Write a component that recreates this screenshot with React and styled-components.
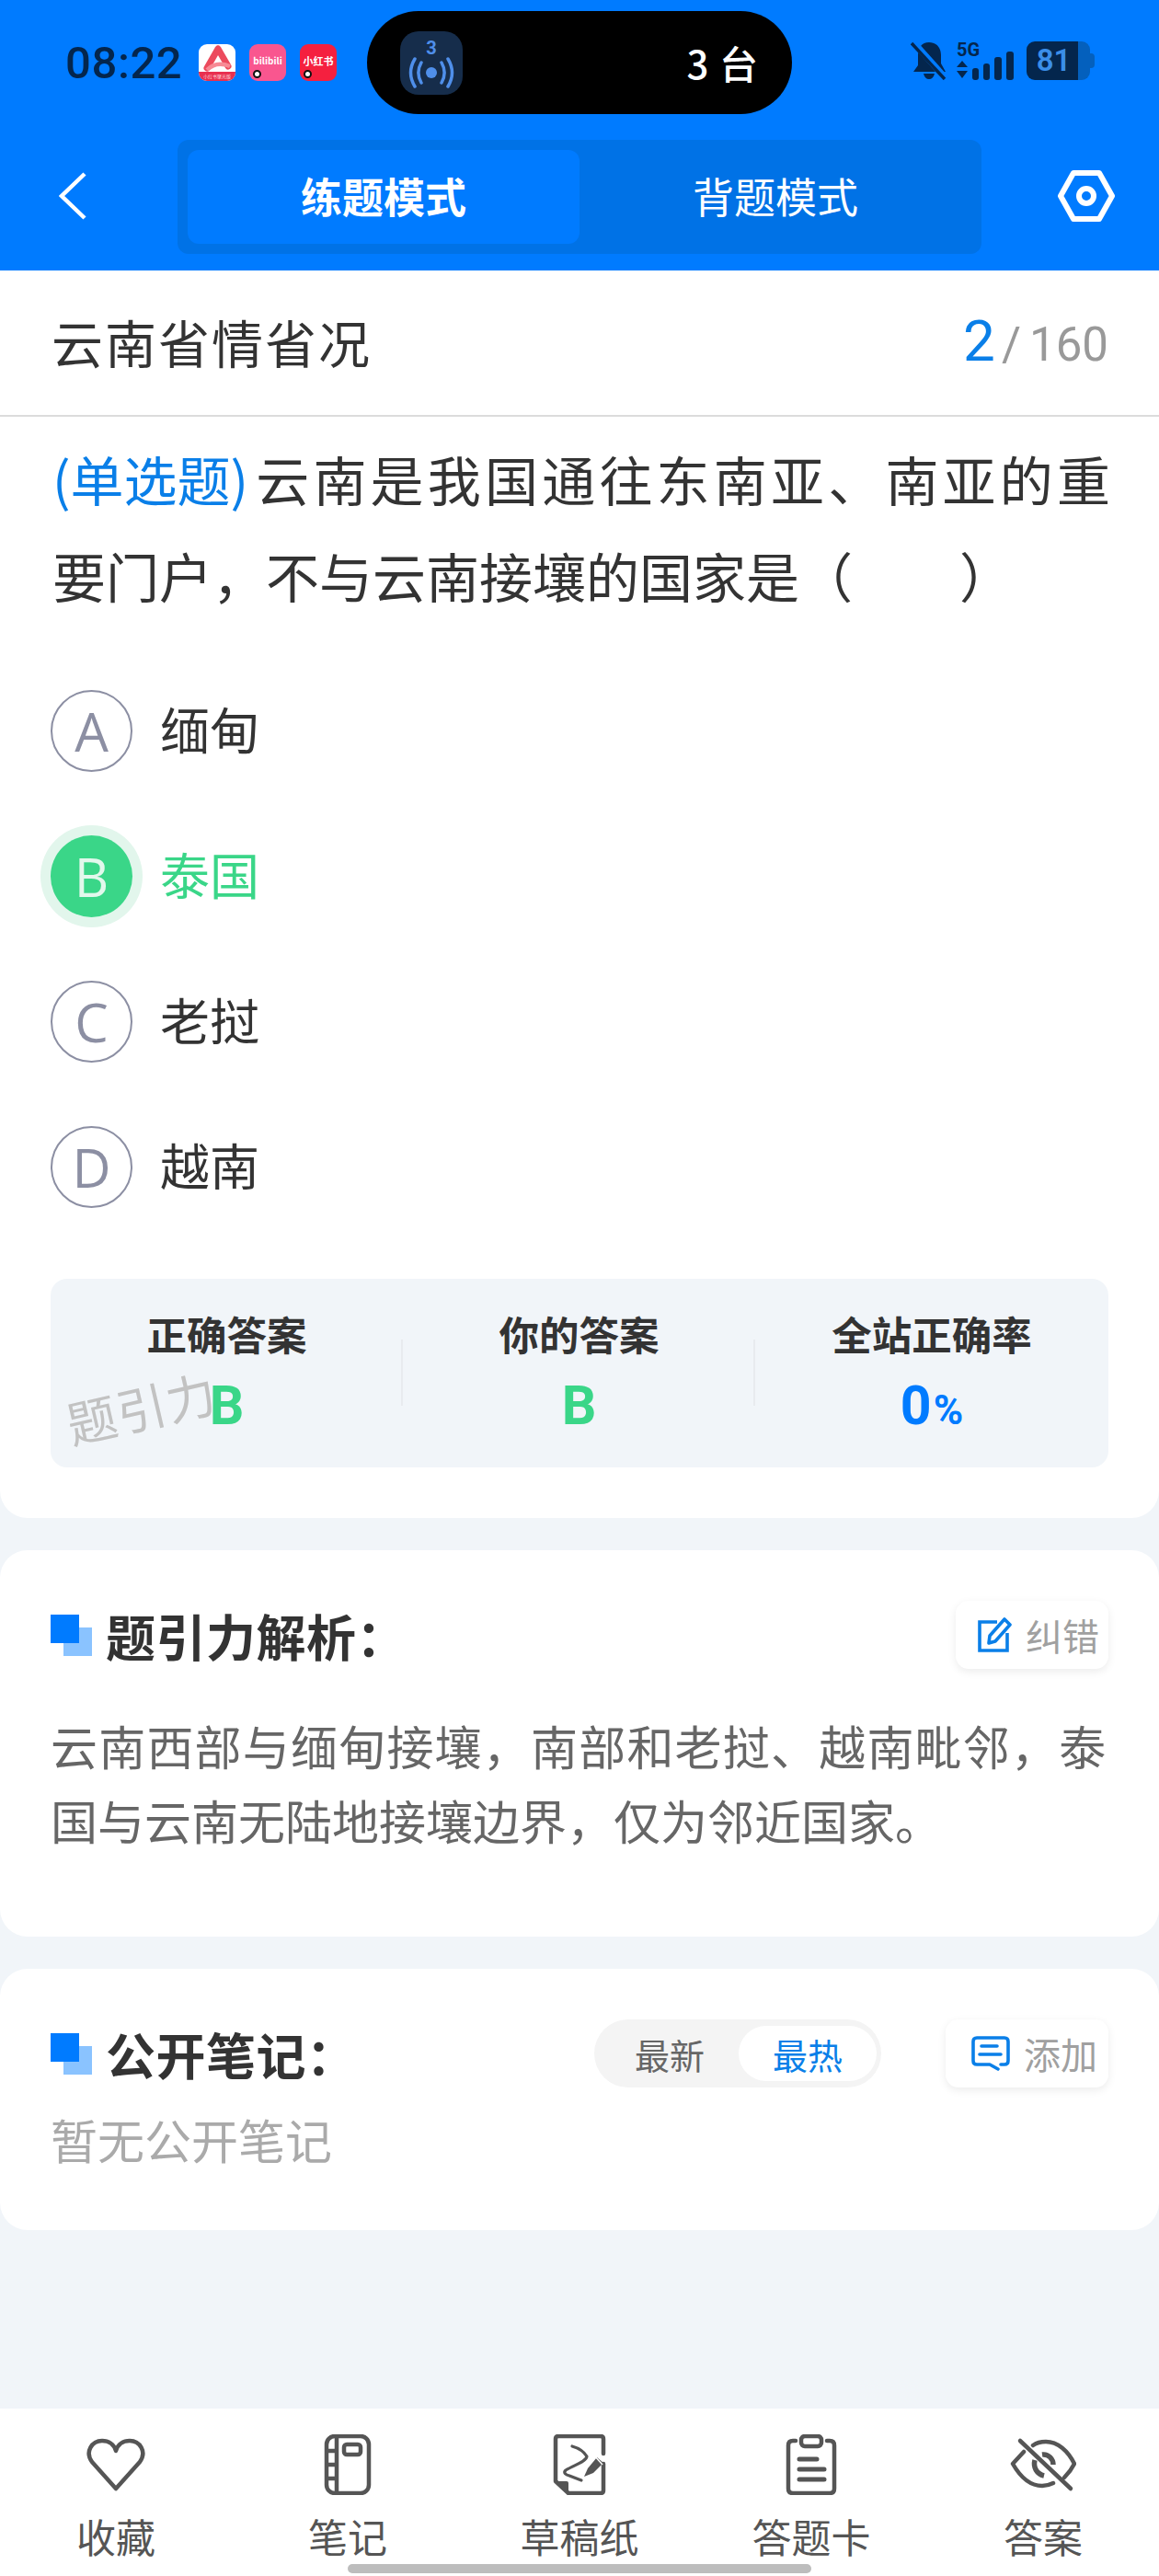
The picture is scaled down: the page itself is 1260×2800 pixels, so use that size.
import React from 'react';
import styled, { createGlobalStyle } from 'styled-components';

const BLUE = '#007bff';
const GREEN = '#3ad688';
const CJK = '"Noto Sans CJK SC", "Noto Sans", sans-serif';

const GlobalStyle = createGlobalStyle`
  html, body {
    margin: 0;
    padding: 0;
    background: #f1f5f9;
    font-family: ${CJK};
  }
  * { box-sizing: border-box; }
`;

const Page = styled.div`
  width: 1260px;
  height: 2800px;
  display: flex;
  flex-direction: column;
  position: relative;
  overflow: hidden;
  background: #f1f5f9;
`;

const Header = styled.header`
  height: 294px;
  flex: none;
  background: ${BLUE};
`;

const StatusBar = styled.div`
  height: 152px;
  padding-top: 12px;
  display: flex;
  align-items: flex-start;
`;

const StatusLeft = styled.div`
  width: 399px;
  height: 112px;
  padding-left: 71px;
  display: flex;
  align-items: center;
`;

const Clock = styled.span`
  width: 145px;
  font: 500 49px/1 Roboto, sans-serif;
  color: #04264d;
  letter-spacing: 0.6px;
`;

const AppIcon = styled.div`
  width: 40px;
  height: 40px;
  margin-right: 15px;
  border-radius: 9px;
  position: relative;
  overflow: hidden;
  background: ${p => p.$bg};
  color: #fff;
  font: 700 ${p => p.$size || 11}px/36px ${CJK};
  text-align: center;
  white-space: nowrap;
`;

const AppDot = styled.i`
  position: absolute;
  left: 4px;
  bottom: 3px;
  width: 9px;
  height: 9px;
  border-radius: 50%;
  background: #fff;
  border: 2.5px solid #111;
`;

const RedFoot = styled.div`
  position: absolute;
  left: 0;
  right: 0;
  bottom: 0;
  height: 10px;
  background: #e8304f;
  color: #ffd9df;
  font: 400 5px/10px ${CJK};
  text-align: center;
`;

const Island = styled.div`
  width: 462px;
  height: 112px;
  padding: 0 36px;
  border-radius: 56px;
  background: #000;
  display: flex;
  align-items: center;
  justify-content: space-between;
`;

const IslandApp = styled.div`
  width: 68px;
  height: 69px;
  border-radius: 20px;
  background: #162d4b;
  display: flex;
  align-items: center;
  justify-content: center;
`;

const IslandText = styled.span`
  color: #fff;
  font-size: 42px;
  line-height: 1;
  font-weight: 500;
  letter-spacing: 1px;
`;

const StatusRight = styled.div`
  flex: 1;
  height: 112px;
  padding: 0 0 4px 129px;
  display: flex;
  align-items: center;
`;

const BatteryBox = styled.div`
  margin-left: 10px;
  width: 74px;
  height: 42px;
  display: flex;
  align-items: stretch;
`;

const BatteryBody = styled.div`
  width: 56px;
  border-radius: 9px 0 0 9px;
  background: #04264d;
  color: #3b8ee8;
  font: 600 33px/42px Roboto, sans-serif;
  text-align: center;
  padding-left: 3px;
`;

const BatteryEnd = styled.div`
  width: 13px;
  border-radius: 0 9px 9px 0;
  background: #0460bd;
  position: relative;
  &::after {
    content: '';
    position: absolute;
    right: -5px;
    top: 13px;
    width: 5px;
    height: 16px;
    border-radius: 0 4px 4px 0;
    background: #0460bd;
  }
`;

const NavBar = styled.nav`
  height: 124px;
  display: flex;
  align-items: center;
  padding: 0 49px 0 64px;
`;

const Back = styled.div`
  width: 129px;
  height: 52px;
  margin-bottom: 3px;
  flex: none;
`;

const Segment = styled.div`
  width: 874px;
  height: 124px;
  flex: none;
  padding: 11px;
  border-radius: 12px;
  background: #0072e6;
  display: flex;
`;

const SegmentItem = styled.div`
  flex: 1;
  padding-bottom: 3px;
  border-radius: 12px;
  background: ${p => (p.$active ? BLUE : 'transparent')};
  color: #fff;
  font-size: 45px;
  font-weight: ${p => (p.$active ? 700 : 400)};
  display: flex;
  align-items: center;
  justify-content: center;
`;

const Gear = styled.div`
  margin-left: 83px;
  margin-bottom: 2px;
  width: 62px;
  height: 56px;
  flex: none;
`;

const QuestionCard = styled.section`
  background: #fff;
  border-radius: 0 0 30px 30px;
  padding-bottom: 55px;
`;

const TitleRow = styled.div`
  height: 159px;
  padding: 0 55px 4px 56px;
  border-bottom: 2px solid #dcdcdc;
  display: flex;
  align-items: center;
  justify-content: space-between;
`;

const ChapterTitle = styled.h1`
  margin: 0;
  font-size: 56px;
  font-weight: 400;
  letter-spacing: 2px;
  color: #333;
`;

const Progress = styled.div`
  display: flex;
  align-items: baseline;
  font-family: Roboto, sans-serif;
  color: #999;
  font-size: 51px;
`;

const ProgressNow = styled.span`
  color: #0a7fe8;
  font-size: 62px;
  margin-right: 7px;
`;

const ProgressSlash = styled.span`
  margin-right: 9px;
`;

const Question = styled.div`
  padding: 15px 55px 0 57px;
  font-size: 58px;
  line-height: 105px;
  color: #333;
  white-space: nowrap;
`;

const QuestionType = styled.span`
  color: #0a7fe8;
  margin-right: 8px;
`;

const FirstLine = styled.span`
  letter-spacing: 4.2px;
`;

const Options = styled.div`
  margin-top: 72px;
  padding-left: 55px;
  display: flex;
  flex-direction: column;
  gap: 69px;
`;

const OptionRow = styled.div`
  height: 89px;
  display: flex;
  align-items: center;
  gap: 30px;
`;

const Letter = styled.div`
  width: 89px;
  height: 89px;
  flex: none;
  border-radius: 50%;
  display: flex;
  align-items: center;
  justify-content: center;
  font: 400 58px/1 "Open Sans", sans-serif;
  ${p =>
    p.$picked
      ? `background: ${GREEN}; color: #e2f8ec; box-shadow: 0 0 0 11px #e2f6ec;`
      : 'border: 2px solid #8c8fa3; color: #8c8fa3;'}
`;

const OptionText = styled.span`
  margin-bottom: 6px;
  font-size: 54px;
  color: ${p => (p.$picked ? GREEN : '#333')};
`;

const AnswerBox = styled.div`
  margin: 77px 55px 0;
  height: 205px;
  border-radius: 18px;
  background: #f1f5f9;
  display: grid;
  grid-template-columns: 383px 383px 1fr;
  position: relative;
`;

const AnswerCol = styled.div`
  padding-top: 32px;
  display: flex;
  flex-direction: column;
  align-items: center;
  position: relative;
  &:not(:last-child)::after {
    content: '';
    position: absolute;
    right: 0;
    top: 66px;
    height: 72px;
    width: 2px;
    background: #e8ebef;
  }
`;

const AnswerLabel = styled.div`
  font-size: 43.5px;
  line-height: 56px;
  font-weight: 700;
  color: #333;
`;

const AnswerValue = styled.div`
  margin-top: 19px;
  font: 700 59px/62px Roboto, sans-serif;
  color: ${p => p.$color};
  small {
    font-size: 44px;
    margin-left: 2px;
  }
`;

const Watermark = styled.div`
  position: absolute;
  left: 16px;
  top: 112px;
  font-size: 54px;
  line-height: 1;
  letter-spacing: 1px;
  color: #c2c2c2;
  font-weight: 400;
  transform: rotate(-13deg);
  white-space: nowrap;
`;

const Card = styled.section`
  margin-top: 35px;
  padding: 55px 55px 0;
  height: ${p => p.$height}px;
  background: #fff;
  border-radius: 30px;
`;

const CardHead = styled.div`
  height: 74px;
  display: flex;
  align-items: center;
`;

const Mark = styled.div`
  width: 45px;
  height: 45px;
  flex: none;
  margin-right: 15px;
  position: relative;
  &::before,
  &::after {
    content: '';
    position: absolute;
    width: 31px;
    height: 31px;
  }
  &::before {
    right: 0;
    bottom: 0;
    background: #8ac3ff;
  }
  &::after {
    left: 0;
    top: 0;
    background: ${BLUE};
  }
`;

const CardTitle = styled.h2`
  margin: 0;
  font-size: 54px;
  font-weight: 700;
  color: #333;
  letter-spacing: 0.5px;
`;

const Spacer = styled.div`
  flex: 1;
`;

const SideButton = styled.div`
  height: 74px;
  width: ${p => p.$w}px;
  padding-left: ${p => p.$pl}px;
  border-radius: 14px;
  background: #fff;
  box-shadow: 0 3px 10px rgba(0, 0, 0, 0.08);
  display: flex;
  align-items: center;
  gap: 15px;
  font-size: 40px;
  color: #a0a0a0;
`;

const BodyText = styled.p`
  margin: 43px 0 0;
  font-size: 51px;
  line-height: 81px;
  color: #666;
  white-space: nowrap;
`;

const BodyFirstLine = styled.span`
  letter-spacing: 1.2px;
`;

const SortPill = styled.div`
  width: 312px;
  height: 74px;
  margin-right: 70px;
  padding: 5px;
  border-radius: 37px;
  background: #f4f4f4;
  display: flex;
  justify-content: flex-end;
  align-items: center;
`;

const SortItem = styled.div`
  width: ${p => p.$w}px;
  height: 60px;
  padding-right: ${p => (p.$active ? 0 : 4)}px;
  border-radius: 30px;
  font-size: 38px;
  display: flex;
  align-items: center;
  justify-content: center;
  background: ${p => (p.$active ? '#fff' : 'transparent')};
  color: ${p => (p.$active ? '#0a7fe8' : '#666')};
`;

const EmptyNote = styled.div`
  margin-top: 20px;
  font-size: 51px;
  line-height: 72px;
  color: #aaa;
`;

const Filler = styled.div`
  flex: 1;
`;

const BottomBar = styled.footer`
  height: 182px;
  flex: none;
  padding-top: 28px;
  background: #fff;
  display: grid;
  grid-template-columns: repeat(5, 252px);
`;

const BarItem = styled.div`
  display: flex;
  flex-direction: column;
  align-items: center;
  color: #555;
`;

const BarIcon = styled.div`
  height: 66px;
  display: flex;
  align-items: center;
  justify-content: center;
`;

const BarLabel = styled.span`
  margin-top: 18px;
  font-size: 43px;
  line-height: 52px;
`;

const HomeBar = styled.div`
  position: absolute;
  left: 378px;
  bottom: 3px;
  width: 504px;
  height: 10px;
  border-radius: 5px;
  background: #bdbdbd;
`;

const stroke = { fill: 'none', stroke: '#555', strokeWidth: 4.5, strokeLinecap: 'round', strokeLinejoin: 'round' };

const icons = {
  heart: (
    <svg width="66" height="60" viewBox="0 0 66 60">
      <path {...stroke} d="M33 56 L7 27 C-1 16 7 4 18 4 C25 4 31 8 33 15 C35 8 41 4 48 4 C59 4 67 16 59 27 Z" />
    </svg>
  ),
  notebook: (
    <svg width="52" height="66" viewBox="0 0 52 66">
      <rect {...stroke} x="3" y="2" width="46" height="62" rx="9" />
      <path {...stroke} strokeLinecap="butt" d="M14 2 V64 M3 18 H14 M3 33 H14 M3 48 H14" />
      <rect {...stroke} x="22" y="11" width="18" height="11" rx="3" />
    </svg>
  ),
  draft: (
    <svg width="58" height="66" viewBox="0 0 58 66">
      <path {...stroke} d="M55 21 V5 Q55 2 52 2 H6 Q3 2 3 5 V51 L17 64 H52 Q55 64 55 61 V32" />
      <path fill="#555" d="M3 51 H15 Q17 51 17 53 V64 Z" />
      <path {...stroke} strokeWidth="3.2" d="M21 13 C28 15 34 19 37 24 C36 30 24 33 14 39 C11 42 14 44 18 45 L31 50" />
      <path fill="#555" d="M34 46 L38 37 L48 25 L55 31 L44 42 Z" />
      <path stroke="#fff" strokeWidth="1.5" d="M45 23 L54 33" />
    </svg>
  ),
  card: (
    <svg width="56" height="66" viewBox="0 0 56 66">
      <path {...stroke} d="M11 7 H8 Q3 7 3 12 V59 Q3 64 8 64 H48 Q53 64 53 59 V12 Q53 7 48 7 H45" />
      <rect {...stroke} x="17" y="2" width="22" height="11" rx="4" />
      <path {...stroke} strokeWidth="5" d="M15 27 H34 M15 38 H42 M15 49 H42" />
    </svg>
  ),
  eye: (
    <svg width="72" height="60" viewBox="0 0 72 60">
      <path {...stroke} d="M15 16 L3 29 C11 43 21 53 35 53 C39 53 43 52 47 50 M25 9 C29 6 34 5 39 5 C52 5 63 15 70 29 C67 35 63 40 59 44" />
      <path {...stroke} strokeWidth="5.5" strokeLinecap="butt" d="M27 25 C25 33 29 40 37 42 M35 19 C42 18 47 24 47 30" />
      <path {...stroke} d="M11 4 L66 56" />
    </svg>
  ),
};

const options = [
  { key: 'A', text: '缅甸' },
  { key: 'B', text: '泰国', picked: true },
  { key: 'C', text: '老挝' },
  { key: 'D', text: '越南' },
];

const barItems = [
  { icon: 'heart', label: '收藏' },
  { icon: 'notebook', label: '笔记' },
  { icon: 'draft', label: '草稿纸' },
  { icon: 'card', label: '答题卡' },
  { icon: 'eye', label: '答案' },
];

const StatusBlock = () => (
  <StatusBar>
    <StatusLeft>
      <Clock>08:22</Clock>
      <AppIcon $bg="#fff">
        <svg width="40" height="30" viewBox="0 0 40 30" style={{ display: 'block' }}>
          <path fill="none" stroke="#ec4a5d" strokeWidth="7" strokeLinecap="round" d="M21 5 L32 24 M21 5 L9 26" />
          <path fill="none" stroke="#f78a95" strokeWidth="4.5" d="M9 28 C16 21 24 20 34 24" />
        </svg>
        <RedFoot>小红书聚光版</RedFoot>
      </AppIcon>
      <AppIcon $bg="#f9568f" $size={10}>
        bilibili
        <AppDot />
      </AppIcon>
      <AppIcon $bg="#f5203f">
        小红书
        <AppDot />
      </AppIcon>
    </StatusLeft>
    <Island>
      <IslandApp>
        <svg width="50" height="58" viewBox="0 0 50 58">
          <text x="25" y="20" textAnchor="middle" fontSize="20" fontWeight="700" fontFamily="Roboto, sans-serif" fill="#4f8fea">3</text>
          <circle cx="25" cy="40" r="6" fill="#4f8fea" />
          <path fill="none" stroke="#4f8fea" strokeWidth="3.5" strokeLinecap="round" d="M14 29 C10 36 10 44 14 51 M36 29 C40 36 40 44 36 51 M7 25 C1 35 1 45 7 55 M43 25 C49 35 49 45 43 55" />
        </svg>
      </IslandApp>
      <IslandText>3 台</IslandText>
    </Island>
    <StatusRight>
      <svg width="40" height="42" viewBox="0 0 40 42">
        <path fill="#04264d" d="M20 1 C28 1 33 7 33 15 V24 L38 33 H3 L8 26 V15 C8 7 12 1 20 1 Z M14 35 H26 C25 39 23 41 20 41 C17 41 15 39 14 35 Z" />
        <path stroke={BLUE} strokeWidth="7" d="M4 2 L38 40" />
        <path stroke="#04264d" strokeWidth="3.5" d="M1 2 L37 41" />
      </svg>
      <svg width="66" height="60" viewBox="0 -8 66 60" style={{ marginLeft: 10 }}>
        <text x="0" y="17" fontSize="20" fontWeight="700" fontFamily="Roboto, sans-serif" fill="#04264d">5G</text>
        <path fill="#04264d" d="M6 22 L12 29 H0 Z M6 41 L12 33 H0 Z" />
        <rect x="17" y="30" width="7" height="13" rx="3" fill="#04264d" />
        <rect x="29" y="25" width="7" height="18" rx="3" fill="#04264d" />
        <rect x="41" y="18" width="8" height="25" rx="3" fill="#04264d" />
        <rect x="54" y="12" width="8" height="31" rx="3" fill="#04264d" />
      </svg>
      <BatteryBox>
        <BatteryBody>81</BatteryBody>
        <BatteryEnd />
      </BatteryBox>
    </StatusRight>
  </StatusBar>
);

const App = () => (
  <Page>
    <GlobalStyle />
    <Header>
      <StatusBlock />
      <NavBar>
        <Back>
          <svg width="30" height="52" viewBox="0 0 30 52">
            <path fill="none" stroke="#fff" strokeWidth="4.5" d="M28 2 L3 26 L28 50" />
          </svg>
        </Back>
        <Segment>
          <SegmentItem $active>练题模式</SegmentItem>
          <SegmentItem>背题模式</SegmentItem>
        </Segment>
        <Gear>
          <svg width="62" height="56" viewBox="0 0 62 56">
            <path fill="none" stroke="#fff" strokeWidth="6" strokeLinejoin="round" d="M17 3 H45 L59 28 L45 53 H17 L3 28 Z" />
            <circle cx="31" cy="28" r="8" fill="none" stroke="#fff" strokeWidth="6" />
          </svg>
        </Gear>
      </NavBar>
    </Header>

    <QuestionCard>
      <TitleRow>
        <ChapterTitle>云南省情省况</ChapterTitle>
        <Progress>
          <ProgressNow>2</ProgressNow>
          <ProgressSlash>/</ProgressSlash>160
        </Progress>
      </TitleRow>
      <Question>
        <QuestionType>(单选题)</QuestionType>
        <FirstLine>云南是我国通往东南亚、南亚的重</FirstLine>
        <br />
        要门户，不与云南接壤的国家是（　　）
      </Question>
      <Options>
        {options.map(o => (
          <OptionRow key={o.key}>
            <Letter $picked={o.picked}>{o.key}</Letter>
            <OptionText $picked={o.picked}>{o.text}</OptionText>
          </OptionRow>
        ))}
      </Options>
      <AnswerBox>
        <Watermark>题引力</Watermark>
        <AnswerCol>
          <AnswerLabel>正确答案</AnswerLabel>
          <AnswerValue $color={GREEN}>B</AnswerValue>
        </AnswerCol>
        <AnswerCol>
          <AnswerLabel>你的答案</AnswerLabel>
          <AnswerValue $color={GREEN}>B</AnswerValue>
        </AnswerCol>
        <AnswerCol>
          <AnswerLabel>全站正确率</AnswerLabel>
          <AnswerValue $color={BLUE}>
            0<small>%</small>
          </AnswerValue>
        </AnswerCol>
      </AnswerBox>
    </QuestionCard>

    <Card $height={420}>
      <CardHead>
        <Mark />
        <CardTitle>题引力解析：</CardTitle>
        <Spacer />
        <SideButton $w={166} $pl={23}>
          <svg width="38" height="40" viewBox="0 0 38 40">
            <path fill="none" stroke="#0a7fe8" strokeWidth="3.6" d="M22 6 H3 V37 H33 V18" />
            <path fill="none" stroke="#0a7fe8" strokeWidth="3.6" strokeLinejoin="round" d="M30 3 L36 9 L20 27 L13 29 L14 21 Z" />
          </svg>
          纠错
        </SideButton>
      </CardHead>
      <BodyText>
        <BodyFirstLine>云南西部与缅甸接壤，南部和老挝、越南毗邻，泰</BodyFirstLine>
        <br />
        国与云南无陆地接壤边界，仅为邻近国家。
      </BodyText>
    </Card>

    <Card $height={284}>
      <CardHead>
        <Mark />
        <CardTitle>公开笔记：</CardTitle>
        <Spacer />
        <SortPill>
          <SortItem $w={146}>最新</SortItem>
          <SortItem $w={150} $active>最热</SortItem>
        </SortPill>
        <SideButton $w={177} $pl={28}>
          <svg width="42" height="38" viewBox="0 0 42 38">
            <path fill="none" stroke="#0a7fe8" strokeWidth="3.6" strokeLinecap="round" strokeLinejoin="round" d="M32 31 H36 Q40 31 40 27 V6 Q40 2 36 2 H6 Q2 2 2 6 V27 Q2 31 6 31 H20 L29 36" />
            <path stroke="#0a7fe8" strokeWidth="3.6" strokeLinecap="round" d="M11 11 H28 M9 20 H32" />
          </svg>
          添加
        </SideButton>
      </CardHead>
      <EmptyNote>暂无公开笔记</EmptyNote>
    </Card>

    <Filler />

    <BottomBar>
      {barItems.map(item => (
        <BarItem key={item.label}>
          <BarIcon>{icons[item.icon]}</BarIcon>
          <BarLabel>{item.label}</BarLabel>
        </BarItem>
      ))}
    </BottomBar>
    <HomeBar />
  </Page>
);

export default App;
